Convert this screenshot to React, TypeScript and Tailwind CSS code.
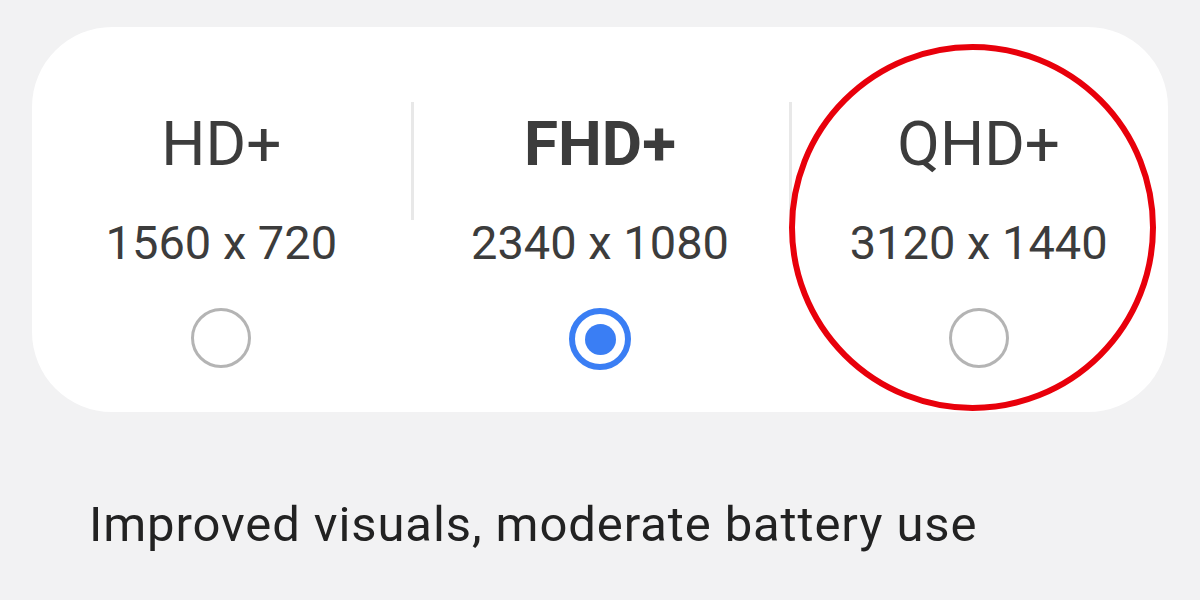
import React from 'react';

type Option = { name: string; size: string; selected?: boolean };

const OPTIONS: Option[] = [
  { name: 'HD+', size: '1560 x 720' },
  { name: 'FHD+', size: '2340 x 1080', selected: true },
  { name: 'QHD+', size: '3120 x 1440' },
];

function Radio({ selected }: { selected?: boolean }) {
  if (selected) {
    return (
      <div className="flex h-[62px] w-[62px] items-center justify-center rounded-full border-[6px] border-[#3a7ef4]">
        <div className="h-[31px] w-[31px] rounded-full bg-[#3a7ef4]" />
      </div>
    );
  }
  return <div className="h-[60px] w-[60px] rounded-full border-[3px] border-[#b4b4b4]" />;
}

export default function App() {
  return (
    <div
      className="relative h-[600px] w-[1200px] overflow-hidden bg-[#f2f2f3]"
      style={{ fontFamily: 'Roboto, "Noto Sans", sans-serif' }}
    >
      <div className="pl-[32px] pr-[32px] pt-[27px]">
        <div className="flex h-[385px] rounded-[80px] bg-white">
          {OPTIONS.map((o, i) => (
            <div key={o.name} className="relative flex flex-1 flex-col items-center pt-[103px]">
              {i > 0 && (
                <div className="absolute left-0 top-[75px] h-[118px] w-[3px] bg-[#e8e8e8]" />
              )}
              <div
                className={`-mt-[17px] text-[62px] leading-none text-[#3c3c3c] ${
                  o.selected ? 'font-bold' : 'font-normal'
                }`}
              >
                {o.name}
              </div>
              <div className="mt-[44px] text-[47px] leading-none text-[#3c3c3c]">{o.size}</div>
              <div className="mt-[42px]">
                <Radio selected={o.selected} />
              </div>
            </div>
          ))}
        </div>
      </div>
      <div className="pl-[89px] pt-[88px] text-[49px] leading-none tracking-[0.9px] text-[#222222]">
        Improved visuals, moderate battery use
      </div>
      {/* red annotation circle */}
      <div className="pointer-events-none absolute left-[789px] top-[44px] h-[367px] w-[367px] rounded-full border-[6px] border-[#e8000b]" />
    </div>
  );
}
